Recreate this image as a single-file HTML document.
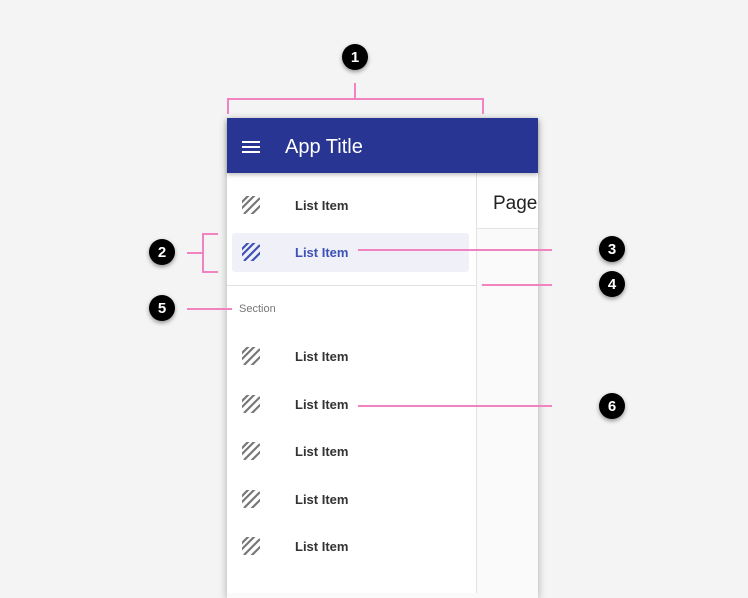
<!DOCTYPE html>
<html><head><meta charset="utf-8"><style>
body{margin:0;width:748px;height:584px;background:#f4f4f4;position:relative;overflow:hidden;font-family:"Liberation Sans",Roboto,sans-serif}
.a{position:absolute}
.frame{left:227px;top:118px;width:311px;height:480px;background:#fafafa;box-shadow:0 2px 8px rgba(0,0,0,.3)}
.bar{left:227px;top:118px;width:311px;height:55px;background:#283593;box-shadow:0 2px 4px rgba(0,0,0,.25);z-index:2}
.drawer{left:227px;top:173px;width:249px;height:420px;background:#fff;border-right:1px solid #e2e2e2}
.page{left:477px;top:173px;width:61px;height:55px;background:#fff;border-bottom:1px solid #e4e4e4}
.item{position:absolute;left:295px;font-size:13px;font-weight:bold;color:#333;line-height:16px}
.ic{position:absolute;left:242px;width:18px;height:18px}
.b{position:absolute;width:26px;height:26px;border-radius:50%;background:#000;color:#fff;font-weight:bold;font-size:15px;line-height:28px;text-align:center;box-shadow:0 2px 4px rgba(0,0,0,.4);z-index:5}
.p{position:absolute;background:#f083c0;z-index:4}
</style></head><body>
<svg width="0" height="0" style="position:absolute"><defs>
<symbol id="st" viewBox="0 0 18 18"><clipPath id="c"><rect width="18" height="18"/></clipPath><g clip-path="url(#c)" stroke-width="2.2"><path d="M-2 8L8 -2M-2 14L14 -2M2 18L18 2M8 20L20 8"/></g></symbol></defs></svg>
<div class="a frame"></div>
<div class="a bar">
<div class="a" style="left:15px;top:23px;width:18px;height:2px;background:#fff;box-shadow:0 5px 0 #fff,0 10px 0 #fff"></div>
<div class="a" style="left:58px;top:18px;color:#fff;font-size:20px">App Title</div>
</div>
<div class="a drawer"></div>
<div class="a page"><div class="a" style="left:16px;top:20px;font-size:19px;color:#222">Page</div></div>
<div class="a" style="left:232px;top:233px;width:237px;height:39px;background:#eff0f8;border-radius:3px"></div>
<div class="a" style="left:227px;top:285px;width:249px;height:1px;background:#e2e2e2"></div>
<div class="a" style="left:239px;top:303px;font-size:11px;color:#777">Section</div>

<svg class="ic" style="top:196px" stroke="#777"><use href="#st"/></svg><div class="item" style="top:198px">List Item</div>
<svg class="ic" style="top:243px" stroke="#3f51b5"><use href="#st"/></svg><div class="item" style="top:245px;color:#3f51b5">List Item</div>
<svg class="ic" style="top:347px" stroke="#777"><use href="#st"/></svg><div class="item" style="top:349px">List Item</div>
<svg class="ic" style="top:395px" stroke="#777"><use href="#st"/></svg><div class="item" style="top:397px">List Item</div>
<svg class="ic" style="top:442px" stroke="#777"><use href="#st"/></svg><div class="item" style="top:444px">List Item</div>
<svg class="ic" style="top:490px" stroke="#777"><use href="#st"/></svg><div class="item" style="top:492px">List Item</div>
<svg class="ic" style="top:537px" stroke="#777"><use href="#st"/></svg><div class="item" style="top:539px">List Item</div>

<div class="p" style="left:354px;top:83px;width:2px;height:16px"></div>
<div class="p" style="left:227px;top:98px;width:257px;height:2px"></div>
<div class="p" style="left:227px;top:98px;width:2px;height:16px"></div>
<div class="p" style="left:482px;top:98px;width:2px;height:16px"></div>
<div class="p" style="left:202px;top:233px;width:2px;height:40px"></div>
<div class="p" style="left:202px;top:233px;width:16px;height:2px"></div>
<div class="p" style="left:202px;top:271px;width:16px;height:2px"></div>
<div class="p" style="left:187px;top:252px;width:16px;height:2px"></div>
<div class="p" style="left:358px;top:249px;width:194px;height:2px"></div>
<div class="p" style="left:482px;top:284px;width:70px;height:2px"></div>
<div class="p" style="left:187px;top:308px;width:45px;height:2px"></div>
<div class="p" style="left:358px;top:405px;width:194px;height:2px"></div>

<div class="b" style="left:342px;top:44px">1</div>
<div class="b" style="left:149px;top:239px">2</div>
<div class="b" style="left:599px;top:236px">3</div>
<div class="b" style="left:599px;top:271px">4</div>
<div class="b" style="left:149px;top:295px">5</div>
<div class="b" style="left:599px;top:393px">6</div>
</body></html>
